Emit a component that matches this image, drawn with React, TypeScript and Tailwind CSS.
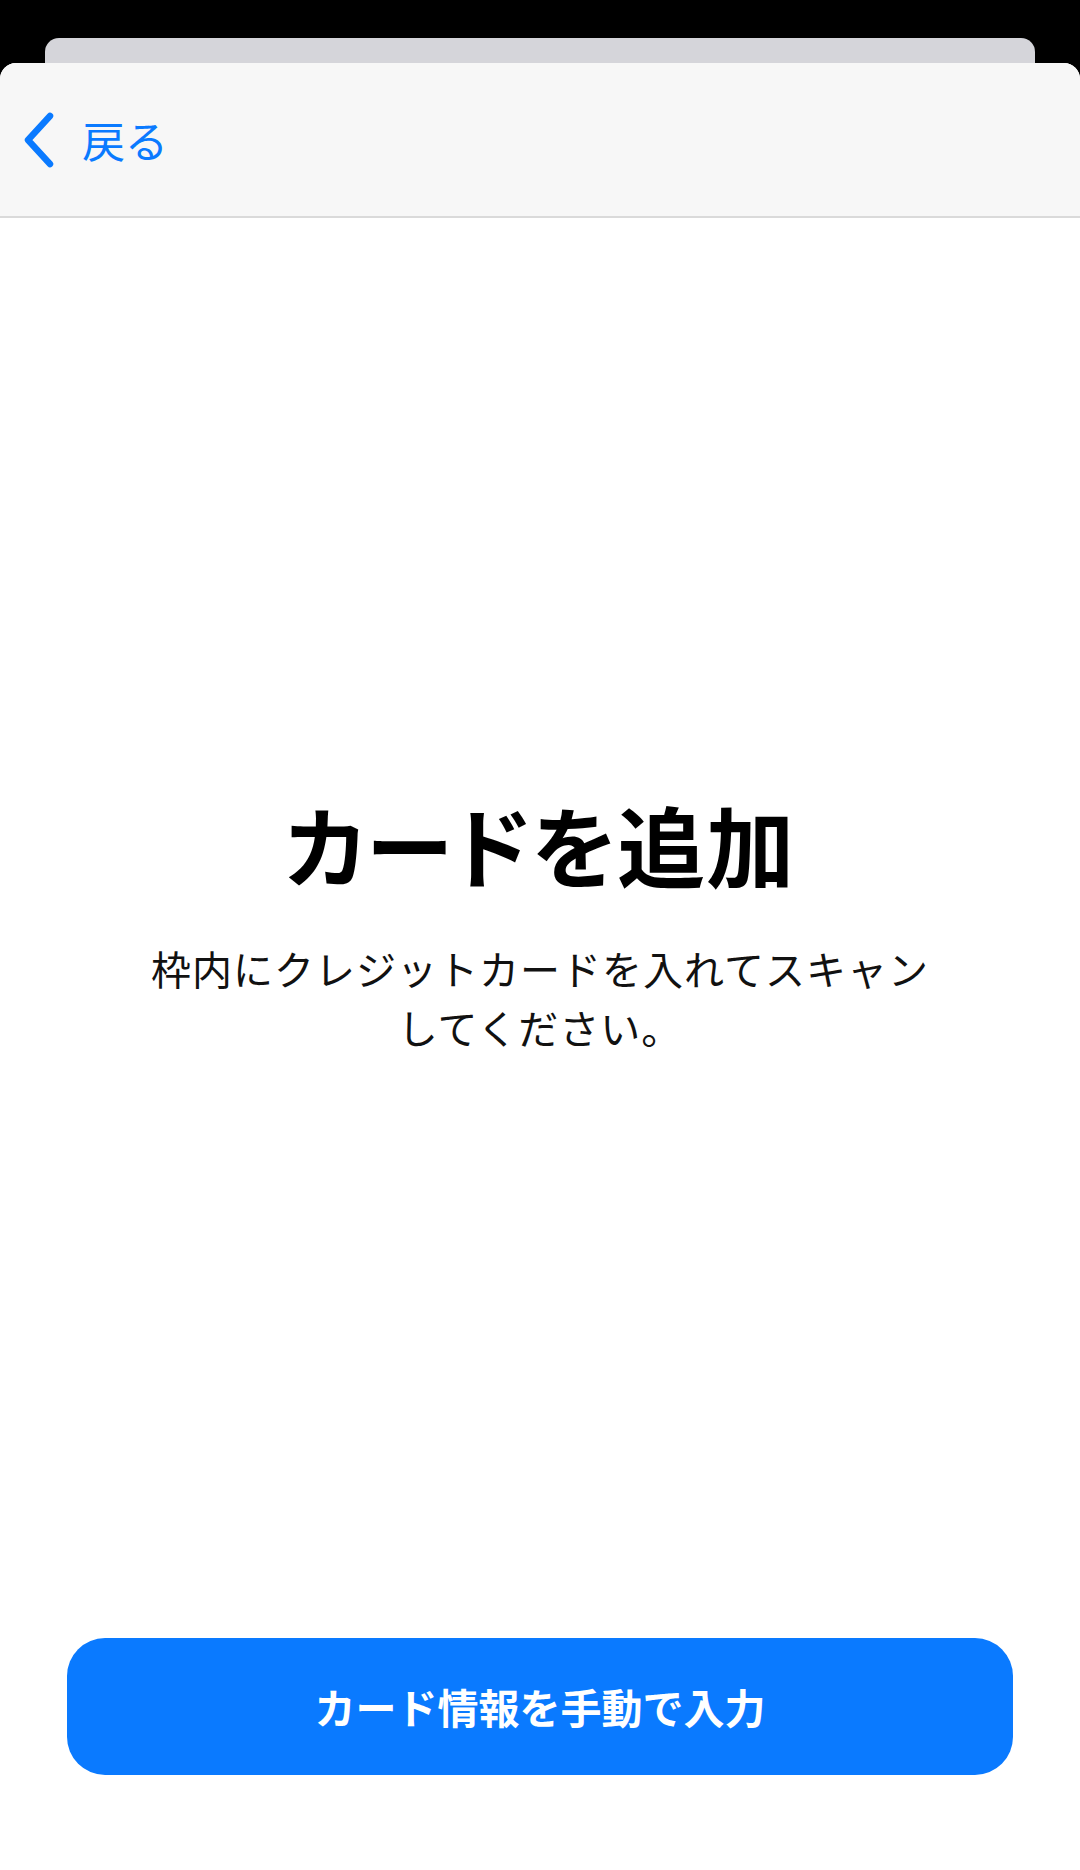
const jpFont = "font-['Noto_Sans_CJK_JP','Noto_Sans',sans-serif]";

function BackChevron() {
  return (
    <svg viewBox="0 0 36 60" className="w-[36px] h-[60px]" fill="none">
      <polyline
        points="30,6 8,30 30,54"
        stroke="currentColor"
        strokeWidth="6.5"
        strokeLinecap="round"
        strokeLinejoin="round"
      />
    </svg>
  );
}

function NavHeader() {
  return (
    <div className="h-[155px] shrink-0 flex items-center bg-[#f7f7f7] border-b-2 border-[#dadada]">
      <button className="flex items-center pl-[20px] text-[#0a7aff]">
        <BackChevron />
        <span className="ml-[26px] text-[43px] leading-none">戻る</span>
      </button>
    </div>
  );
}

export default function App() {
  return (
    <div className={`h-[1870px] bg-black flex flex-col ${jpFont}`}>
      {/* stacked sheet behind */}
      <div className="h-[38px] shrink-0" />
      <div className="h-[25px] shrink-0 mx-[45px] rounded-t-[14px] bg-[#d5d5da]" />

      {/* front sheet */}
      <div className="flex-1 flex flex-col rounded-t-[16px] bg-white overflow-hidden">
        <NavHeader />

        <div className="flex-1 flex flex-col items-center justify-center">
          <h1 className="text-[88px] font-bold leading-none tracking-[1px] text-black [font-feature-settings:'palt']">
            カードを追加
          </h1>
          <p className="mt-[52px] text-[40px] leading-[59px] text-center text-[#111] tracking-[1px] w-[800px]">
            枠内にクレジットカードを入れてスキャン
            <br />
            してください。
          </p>
        </div>

        <div className="px-[67px] pb-[95px]">
          <button className="w-full h-[137px] rounded-[38px] bg-[#0a7aff] flex items-center justify-center">
            <span className="text-[41px] font-bold text-white leading-none">カード情報を手動で入力</span>
          </button>
        </div>
      </div>
    </div>
  );
}
